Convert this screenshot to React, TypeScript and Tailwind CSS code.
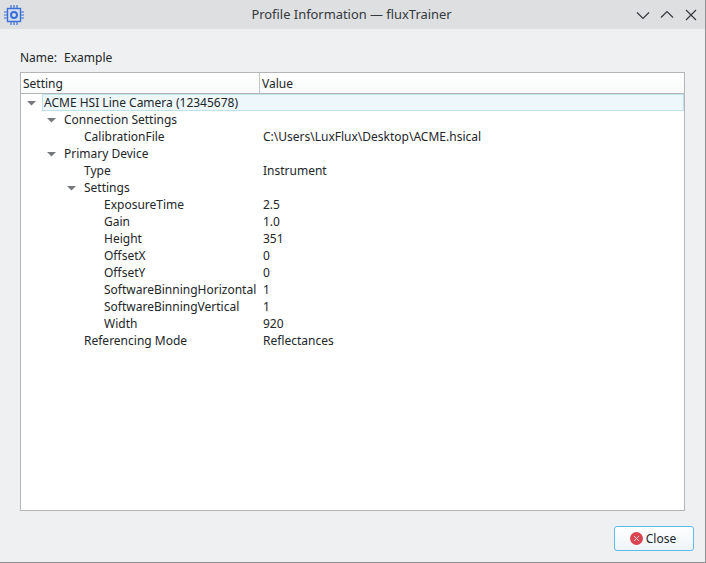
import { X } from "lucide-react";

const rows = [
  { label: "ACME HSI Line Camera (12345678)", value: "", depth: 0, open: true, selected: true },
  { label: "Connection Settings", value: "", depth: 1, open: true },
  { label: "CalibrationFile", value: "C:\\Users\\LuxFlux\\Desktop\\ACME.hsical", depth: 2 },
  { label: "Primary Device", value: "", depth: 1, open: true },
  { label: "Type", value: "Instrument", depth: 2 },
  { label: "Settings", value: "", depth: 2, open: true },
  { label: "ExposureTime", value: "2.5", depth: 3 },
  { label: "Gain", value: "1.0", depth: 3 },
  { label: "Height", value: "351", depth: 3 },
  { label: "OffsetX", value: "0", depth: 3 },
  { label: "OffsetY", value: "0", depth: 3 },
  { label: "SoftwareBinningHorizontal", value: "1", depth: 3 },
  { label: "SoftwareBinningVertical", value: "1", depth: 3 },
  { label: "Width", value: "920", depth: 3 },
  { label: "Referencing Mode", value: "Reflectances", depth: 2 },
];

function ChipIcon() {
  return (
    <svg width="20" height="20" viewBox="0 0 20 20" fill="none" stroke="#3b6fd4">
      <rect x="3.5" y="3.5" width="13" height="13" fill="#d3def3" strokeWidth="1.4" />
      <circle cx="10" cy="10" r="3" strokeWidth="2" />
      <path d="M7 0v3M10 0v3M13 0v3M7 17v3M10 17v3M13 17v3M0 7h3M0 10h3M0 13h3M17 7h3M17 10h3M17 13h3" strokeWidth="1.2" />
    </svg>
  );
}

function Row({ row }: { row: (typeof rows)[number] }) {
  return (
    <div className="flex h-[17px] items-center">
      <div className="flex w-[239px] shrink-0 items-center" style={{ paddingLeft: row.depth * 20 + 3 }}>
        <span className="flex w-[20px] shrink-0 pl-[3px]">
          {row.open && (
            <svg width="9" height="5" viewBox="0 0 9 5" className="mt-px" fill="#75787c">
              <path d="M0 0h9L4.5 4.5z" />
            </svg>
          )}
        </span>
        <span className={row.selected ? "-ml-[2px] flex h-[17px] w-[642px] shrink-0 items-center border border-[#bfe0ef] bg-[#eef8fc] pl-px" : ""}>
          {row.label}
        </span>
      </div>
      {row.value && <div className="pl-[3px]">{row.value}</div>}
    </div>
  );
}

export default function App() {
  return (
    <div className="flex h-[563px] w-[706px] flex-col overflow-hidden border-b border-r border-[#8f9091] bg-[#eff0f1] text-[12px] text-[#232629] [font-family:'Noto_Sans',sans-serif]">
      <div className="flex h-[29px] shrink-0 items-center bg-[#dedfe0] pl-[4px] pr-[6px]">
        <ChipIcon />
        <div className="flex-1 pl-[44px] text-center text-[12.9px] text-[#35393d]">Profile Information — fluxTrainer</div>
        <div className="flex items-center gap-[8px] text-[#35393d]">
          <svg width="16" height="16" viewBox="0 0 16 16" fill="none" stroke="currentColor" strokeWidth="1.2">
            <path d="M2 5.5l6 6 6-6" />
          </svg>
          <svg width="16" height="16" viewBox="0 0 16 16" fill="none" stroke="currentColor" strokeWidth="1.2">
            <path d="M2 10.5l6-6 6 6" />
          </svg>
          <svg width="16" height="16" viewBox="0 0 16 16" fill="none" stroke="currentColor" strokeWidth="1.2">
            <path d="M3 3l10 10M13 3L3 13" />
          </svg>
        </div>
      </div>
      <div className="flex min-h-0 flex-1 flex-col pb-[11px] pl-[20px] pr-[11px] pt-[20px]">
        <div className="flex h-[17px] gap-[7px]">
          <span>Name:</span>
          <span>Example</span>
        </div>
        <div className="mr-[9px] mt-[6px] flex h-[439px] flex-col border border-[#b4b5b6] bg-white">
          <div className="flex h-[21px] shrink-0 border-b border-[#b4b5b6] bg-gradient-to-b from-white to-[#f8f9f9]">
            <div className="h-full w-[239px] border-r border-[#c4c5c6] pl-[2px] pt-px leading-[20px]">Setting</div>
            <div className="pl-[2px] pt-px leading-[20px]">Value</div>
          </div>
          {rows.map((row) => (
            <Row key={row.label} row={row} />
          ))}
        </div>
        <div className="mt-[15px] flex justify-end">
          <button className="flex h-[25px] w-[80px] items-center justify-center gap-[3px] rounded-[3px] border border-[#5cbbea] bg-gradient-to-b from-white to-[#eef4f8] pr-[2px]">
            <span className="flex h-[13px] w-[13px] items-center justify-center rounded-full bg-[#da4453]">
              <X size={9} strokeWidth={2.5} color="#f8d8dc" />
            </span>
            Close
          </button>
        </div>
      </div>
    </div>
  );
}
